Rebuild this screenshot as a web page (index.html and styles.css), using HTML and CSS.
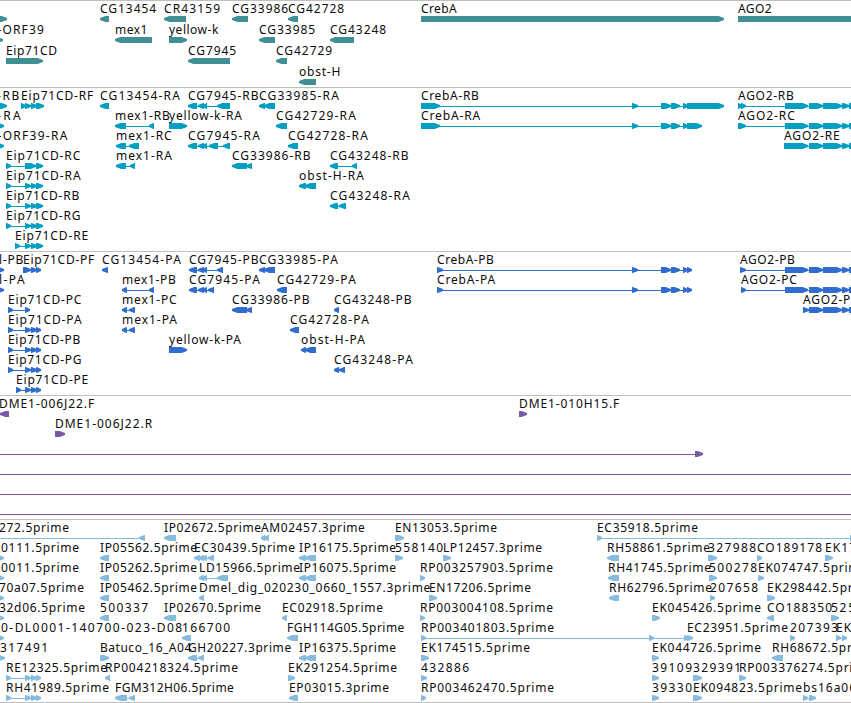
FILE: index.html
```html
<!DOCTYPE html>
<html lang="en">
<head>
<meta charset="utf-8">
<title>Genome browser tracks</title>
<link rel="stylesheet" href="styles.css">
</head>
<body>
<main class="browser">
  <section class="track track-genes" data-track="genes"></section>
  <section class="track track-transcripts" data-track="transcripts"></section>
  <section class="track track-proteins" data-track="proteins"></section>
  <section class="track track-clones" data-track="clones"></section>
  <section class="track track-ests" data-track="ests"></section>
  <div class="track-end"></div>
</main>
<script src="tracks.js"></script>
</body>
</html>
```
FILE: styles.css
```css
html,
body {
  margin: 0;
  background: #fff;
}

.browser {
  display: flex;
  flex-direction: column;
  width: 851px;
  height: 703px;
  overflow: hidden;
}

.track {
  box-sizing: border-box;
  flex: none;
  border-top: 1px solid #bfbfbf;
  overflow: hidden;
}

.track svg {
  display: block;
  width: 851px;
  height: 100%;
}

.track-genes { height: 87px; color: #408f95; }
.track-transcripts { height: 164px; color: #009fc1; }
.track-proteins { height: 144px; color: #306dce; }
.track-clones { height: 124px; color: #7959a6; }
.track-ests { height: 183px; color: #87bbde; }

.track-end {
  flex: none;
  height: 1px;
  background: #bfbfbf;
}

.label {
  font-family: "Noto Sans", "Open Sans", sans-serif;
  font-size: 12px;
  fill: #0c0c0c;
}

.exon,
.intron {
  fill: currentColor;
}
```
FILE: tracks.js
```js
// Each item: [row, label, x, strand, spans]; spans are [start, end] pairs.
const agoTail = [[785, 808], [809, 823], [823, 842], [842, 849], [849, 857]];
const creb = [[632, 638], [661, 671], [671, 680], [683, 688]];
const eip = [[25, 31], [31, 37], [36, 43]];
const eipCds = [[25, 31], [31, 37], [36, 41]];
const edge = [[-8, 4]];

const tracks = {
  genes: { pitch: 21, items: [
    [0, "", 0, 1, [[-8, 7]]],
    [0, "CG13454", 100, -1, [[100, 109]]],
    [0, "CR43159", 164, -1, [[164, 186]]],
    [0, "CG33986", 232, -1, [[232, 248]]],
    [0, "CG42728", 288, -1, [[288, 298]]],
    [0, "CrebA", 421, 1, [[421, 724]]],
    [0, "AGO2", 738, 1, [[738, 856]]],
    [1, "-ORF39", -2.5, 1, [[-8, 3]]],
    [1, "mex1", 115, -1, [[115, 152]]],
    [1, "yellow-k", 169, 1, [[169, 187]]],
    [1, "CG33985", 259, -1, [[259, 275]]],
    [1, "CG43248", 330, -1, [[330, 354]]],
    [2, "Eip71CD", 6, 1, [[6, 43]]],
    [2, "CG7945", 188, -1, [[188, 230]]],
    [2, "CG42729", 276, -1, [[276, 287]]],
    [3, "obst-H", 299, -1, [[299, 316]]]
  ] },
  transcripts: { pitch: 20, items: [
    [0, "-RB", -3, 1, [[-8, 7]]],
    [0, "Eip71CD-RF", 21, 1, [[21, 26], [25, 31], [31, 37], [36, 44]]],
    [0, "CG13454-RA", 100, -1, [[100, 109]]],
    [0, "CG7945-RB", 188, -1, [[188, 197], [198, 204], [203, 207], [217, 230]]],
    [0, "CG33985-RA", 259, -1, [[259, 265], [264, 275]]],
    [0, "CrebA-RB", 421, 1, [[421, 440], ...creb, [687, 724]]],
    [0, "AGO2-RB", 738, 1, [[738, 742], [741, 746], ...agoTail]],
    [1, "-RA", -3, 1, edge],
    [1, "mex1-RB", 115, -1, [[115, 126], [149, 154]]],
    [1, "yellow-k-RA", 169, 1, [[169, 187]]],
    [1, "CG42729-RA", 276, -1, [[276, 287]]],
    [1, "CrebA-RA", 421, 1, [[421, 440], ...creb, [687, 702]]],
    [1, "AGO2-RC", 738, 1, [[738, 746], ...agoTail]],
    [2, "-ORF39-RA", -2.5, 1, edge],
    [2, "mex1-RC", 116, -1, [[116, 126], [129, 139]]],
    [2, "CG7945-RA", 188, -1, [[188, 197], [198, 204], [203, 207], [209, 218], [223, 230]]],
    [2, "CG42728-RA", 288, -1, [[288, 298]]],
    [2, "AGO2-RE", 784, 1, [[784, 808], ...agoTail.slice(1)]],
    [3, "Eip71CD-RC", 6, 1, [[6, 11], [25, 36], [36, 43]]],
    [3, "mex1-RA", 116, -1, [[116, 126], [130, 135]]],
    [3, "CG33986-RB", 232, -1, [[232, 247], [246, 252]]],
    [3, "CG43248-RB", 330, -1, [[330, 338], [352, 357]]],
    [4, "Eip71CD-RA", 6, 1, [[6, 11], ...eip]],
    [4, "obst-H-RA", 299, -1, [[299, 306], [305, 316]]],
    [5, "Eip71CD-RB", 6, 1, [[6, 11], ...eip]],
    [5, "CG43248-RA", 330, -1, [[330, 338], [339, 346]]],
    [6, "Eip71CD-RG", 6, 1, [[6, 11], ...eip]],
    [7, "Eip71CD-RE", 15, 1, [[15, 20], ...eip]]
  ] },
  proteins: { pitch: 20, items: [
    [0, "l-PB", -1, 1, edge],
    [0, "Eip71CD-PF", 23, 1, [[23, 31], [31, 37], [36, 41]]],
    [0, "CG13454-PA", 102, -1, [[102, 108]]],
    [0, "CG7945-PB", 189, -1, [[189, 197], [198, 204], [203, 207], [217, 223]]],
    [0, "CG33985-PA", 259, -1, [[259, 265], [264, 275]]],
    [0, "CrebA-PB", 437, 1, [[437, 443], ...creb, [687, 692]]],
    [0, "AGO2-PB", 740, 1, [[740, 746], ...agoTail]],
    [1, "l-PA", -1, 1, edge],
    [1, "mex1-PB", 122, -1, [[122, 127], [149, 154]]],
    [1, "CG7945-PA", 189, -1, [[189, 197], [198, 204], [203, 207], [208, 214]]],
    [1, "CG42729-PA", 277, -1, [[277, 287]]],
    [1, "CrebA-PA", 437, 1, [[437, 443], ...creb, [687, 692]]],
    [1, "AGO2-PC", 741, 1, [[741, 746], ...agoTail]],
    [2, "Eip71CD-PC", 8, 1, [[8, 13], [25, 30]]],
    [2, "mex1-PC", 122, -1, [[122, 127], [129, 135]]],
    [2, "CG33986-PB", 232, -1, [[232, 247], [246, 252]]],
    [2, "CG43248-PB", 334, -1, [[334, 339]]],
    [2, "AGO2-PE", 803, 1, [[803, 809], ...agoTail.slice(1)]],
    [3, "Eip71CD-PA", 8, 1, [[8, 13], ...eipCds]],
    [3, "mex1-PA", 122, -1, [[122, 127], [129, 135]]],
    [3, "CG42728-PA", 290, -1, [[290, 299]]],
    [4, "Eip71CD-PB", 8, 1, [[8, 13], ...eipCds]],
    [4, "yellow-k-PA", 169, 1, [[169, 187]]],
    [4, "obst-H-PA", 301, -1, [[301, 306], [305, 316]]],
    [5, "Eip71CD-PG", 8, 1, [[8, 13], ...eipCds]],
    [5, "CG43248-PA", 334, -1, [[334, 339], [339, 345]]],
    [6, "Eip71CD-PE", 16, 1, [[16, 21], ...eipCds]]
  ] },
  clones: { pitch: 20, items: [
    [0, "DME1-006J22.F", -1, -1, [[0, 9]]],
    [0, "DME1-010H15.F", 519, 1, [[519, 527]]],
    [1, "DME1-006J22.R", 55, 1, [[55, 65]]],
    [2, "", 0, 1, [[-20, -10], [695, 703]]],
    [3, "", 0, 1, [[-20, -10], [860, 870]]],
    [4, "", 0, 1, [[-20, -10], [860, 870]]],
    [5, "", 0, 1, [[-20, -10], [860, 870]]]
  ] },
  ests: { pitch: 20, items: [
    [0, "272.5prime", -1, -1, [[-20, -10], [139, 145]]],
    [0, "IP02672.5prime", 164, -1, [[164, 176]]],
    [0, "AM02457.3prime", 261, -1, [[261, 265], [263, 269]]],
    [0, "EN13053.5prime", 395, 1, [[395, 404]]],
    [0, "EC35918.5prime", 597, 1, [[597, 602], [850, 856]]],
    [1, "0111.5prime", 1, 1, edge],
    [1, "IP05562.5prime", 100, -1, [[100, 109]]],
    [1, "EC30439.5prime", 194, -1, [[194, 200], [199, 204], [203, 207], [208, 214]]],
    [1, "IP16175.5prime", 299, -1, [[299, 306], [305, 316]]],
    [1, "558140", 395, 1, [[395, 403]]],
    [1, "LP12457.3prime", 443, 1, [[443, 451]]],
    [1, "RH58861.5prime", 607, -1, [[607, 619]]],
    [1, "327988", 708, 1, [[708, 717]]],
    [1, "CO189178", 757, 1, [[757, 762]]],
    [1, "EK17", 825, 1, [[825, 833]]],
    [2, "0011.5prime", 1, 1, edge],
    [2, "IP05262.5prime", 100, -1, [[100, 109]]],
    [2, "LD15966.5prime", 199, -1, [[199, 204], [203, 207], [217, 228]]],
    [2, "IP16075.5prime", 299, -1, [[299, 306], [305, 316]]],
    [2, "RP003257903.5prime", 420, 1, [[420, 425]]],
    [2, "RH41745.5prime", 608, -1, [[608, 619]]],
    [2, "500278", 709, 1, [[709, 717]]],
    [2, "EK074747.5prime", 758, 1, [[758, 764]]],
    [3, "70a07.5prime", -1, 1, edge],
    [3, "IP05462.5prime", 100, -1, [[100, 109]]],
    [3, "Dmel_dig_020230_0660_1557.3prime", 199, -1, [[199, 204]]],
    [3, "EN17206.5prime", 429, 1, [[429, 437]]],
    [3, "RH62796.5prime", 609, -1, [[609, 619]]],
    [3, "207658", 710, 1, [[710, 715]]],
    [3, "EK298442.5prime", 767, 1, [[767, 775]]],
    [4, "32d06.5prime", -1, 1, edge],
    [4, "500337", 100, -1, [[100, 109]]],
    [4, "IP02670.5prime", 164, -1, [[164, 176]]],
    [4, "EC02918.5prime", 282, -1, [[282, 287]]],
    [4, "RP003004108.5prime", 420, 1, [[420, 425]]],
    [4, "EK045426.5prime", 652, 1, [[652, 660]]],
    [4, "CO188350", 767, -1, [[767, 774]]],
    [4, "525", 831, 1, [[831, 839]]],
    [5, "0-DL0001-140700-023-D08", 1, 1, edge],
    [5, "166700", 182, -1, [[182, 191]]],
    [5, "FGH114G05.5prime", 287, -1, [[287, 298]]],
    [5, "RP003401803.5prime", 421, 1, [[421, 426], [649, 654], [684, 689]]],
    [5, "EC23951.5prime", 687, 1, [[687, 693]]],
    [5, "207393", 790, 1, [[790, 795]]],
    [5, "EK0", 836, 1, [[836, 841], [842, 847]]],
    [6, "317491", 0, 1, [[-8, 5]]],
    [6, "Batuco_16_A04", 100, 1, [[100, 109]]],
    [6, "GH20227.3prime", 188, -1, [[188, 197], [198, 204]]],
    [6, "IP16375.5prime", 299, -1, [[299, 306], [305, 316]]],
    [6, "EK174515.5prime", 421, 1, [[421, 429]]],
    [6, "EK044726.5prime", 652, 1, [[652, 659]]],
    [6, "RH68672.5prime", 772, -1, [[772, 783]]],
    [7, "RE12325.5prime", 6, 1, [[6, 11], ...eipCds]],
    [7, "RP004218324.5prime", 105, -1, [[105, 110]]],
    [7, "EK291254.5prime", 288, 1, [[288, 295]]],
    [7, "432886", 421, 1, [[421, 427]]],
    [7, "39109", 652, 1, [[652, 659]]],
    [7, "329391", 693, 1, [[693, 702]]],
    [7, "RP003376274.5prime", 739, 1, [[739, 746]]],
    [8, "RH41989.5prime", 6, 1, [[6, 11], ...eipCds]],
    [8, "FGM312H06.5prime", 115, -1, [[115, 127], [129, 135]]],
    [8, "EP03015.3prime", 289, -1, [[289, 298]]],
    [8, "RP003462470.5prime", 421, 1, [[421, 426]]],
    [8, "39330", 652, 1, [[652, 659]]],
    [8, "EK094823.5prime", 693, 1, [[693, 702]]],
    [8, "bs16a06", 803, 1, [[803, 808], [809, 816]]]
  ] }
};

// Label advance widths in pixels; anything not listed is 8 wide.
const advance = {
  "-": 7.3, ".": 4.3, "_": 6, A: 8.3, B: 7, D: 9, E: 7, F: 6, G: 8.2, H: 9,
  I: 4, J: 4, L: 6, M: 9.6, N: 9, O: 9, P: 7, a: 7, c: 6, e: 7, i: 3, l: 3,
  m: 11.4, o: 7, r: 4.3, s: 6, t: 4, w: 9, x: 6, y: 6, k: 7
};

const NS = "http://www.w3.org/2000/svg";

function add(parent, name, attrs) {
  const el = document.createElementNS(NS, name);
  for (const key in attrs) el.setAttribute(key, attrs[key]);
  parent.appendChild(el);
  return el;
}

function exonPoints(x1, x2, y, strand) {
  const head = Math.min(x2 - x1 - 0.6, 5.4);
  return strand > 0
    ? `${x1},${y} ${x2 - head},${y} ${x2},${y + 2} ${x2},${y + 4} ${x2 - head},${y + 6} ${x1},${y + 6}`
    : `${x2},${y} ${x1 + head},${y} ${x1},${y + 2} ${x1},${y + 4} ${x1 + head},${y + 6} ${x2},${y + 6}`;
}

document.querySelectorAll("[data-track]").forEach(section => {
  const { pitch, items } = tracks[section.dataset.track];
  const svg = add(section, "svg", {});
  for (const [row, label, x, strand, spans] of items) {
    const top = 15 + row * pitch;
    const start = spans[0][0] + 1;
    const end = spans[spans.length - 1][1] - 1;
    if (spans.length > 1) {
      add(svg, "rect", { class: "intron", x: start, y: top + 3, width: end - start, height: 1 });
    }
    for (const [x1, x2] of spans) {
      add(svg, "polygon", { class: "exon", points: exonPoints(x1, x2, top, strand) });
    }
    if (label) {
      const width = [...label].reduce((sum, ch) => sum + (advance[ch] || 8), 0);
      add(svg, "text", { class: "label", x: x, y: top - 3, textLength: width.toFixed(1) }).textContent = label;
    }
  }
});
```
